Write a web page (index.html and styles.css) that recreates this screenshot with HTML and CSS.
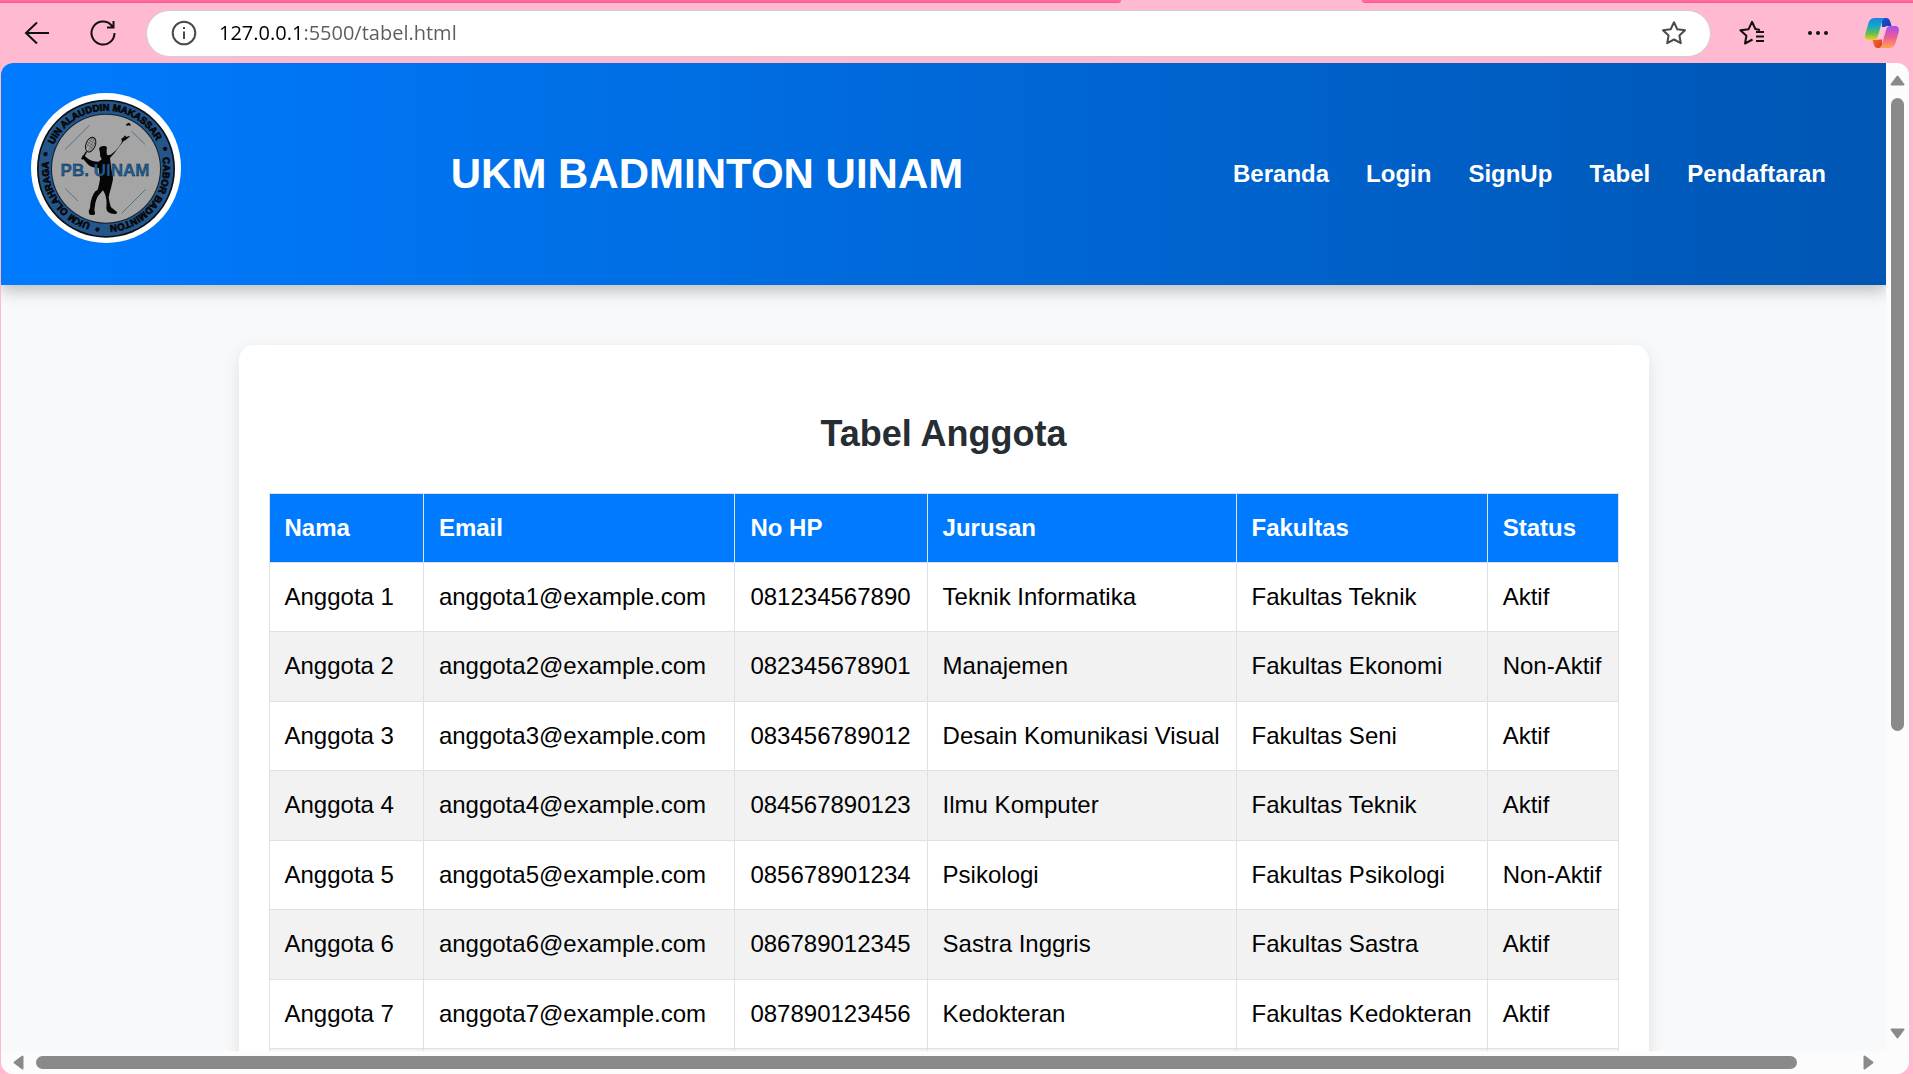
FILE: index.html
```html
<!DOCTYPE html>
<html lang="id">
<head>
<meta charset="utf-8">
<meta name="viewport" content="width=device-width, initial-scale=1">
<title>Tabel Anggota</title>
<link rel="stylesheet" href="styles.css">
</head>
<body>
<div class="browser">
  <div class="tabstrip"><span class="tabstrip-left"></span><span class="tabstrip-right"></span></div>
  <div class="toolbar">
    <button class="tool" type="button" aria-label="Back">
      <svg width="28" height="28" viewBox="0 0 28 28"><path d="M26 14H3M14 3.500L3 14l11 10.500"/></svg>
    </button>
    <button class="tool" type="button" aria-label="Refresh">
      <svg width="28" height="28" viewBox="0 0 28 28"><path d="M25.500 14A11.500 11.500 0 1 1 22.500 6.300L24.500 8.500M24.500 2v6.500H18"/></svg>
    </button>
    <div class="address">
      <svg class="soft" width="26" height="26" viewBox="0 0 26 26"><circle cx="13" cy="13" r="11.300"/><path d="M13 11.500v7.500M13 7v2"/></svg>
      <input class="url" type="text" aria-label="Address" value="127.0.0.1:5500/tabel.html">
      <button class="star" type="button" aria-label="Add to favorites">
        <svg class="soft" width="26" height="26" viewBox="0 0 26 26"><path d="M13 2.200l3.300 7 7.700 1-5.600 5.300 1.400 7.700-6.800-3.700-6.800 3.700 1.400-7.700L2 10.200l7.700-1z" stroke-linejoin="round"/></svg>
      </button>
    </div>
    <button class="tool" type="button" aria-label="Favorites">
      <svg width="28" height="28" viewBox="0 0 28 28"><path d="M14.500 20.500l-7.500 4 1.400-7.700-6-5.500 8.200-1.100L14 2.800l3.400 7.200 4.600 1M18 13h8M18 17.500h8M18 22h8" stroke-linejoin="round"/></svg>
    </button>
    <button class="tool" type="button" aria-label="Settings and more">
      <svg class="dots" width="28" height="28" viewBox="0 0 28 28"><circle cx="6" cy="14" r="2"/><circle cx="14" cy="14" r="2"/><circle cx="22" cy="14" r="2"/></svg>
    </button>
    <button class="tool copilot" type="button" aria-label="Copilot">
      <svg width="36" height="34" viewBox="0 0 36 34">
        <defs>
          <linearGradient id="cool" x1="0" y1="0" x2="0" y2="1"><stop offset="0" stop-color="#1687dd"/><stop offset=".35" stop-color="#12a6cf"/><stop offset=".7" stop-color="#5fc04e"/><stop offset="1" stop-color="#f4cf18"/></linearGradient>
          <linearGradient id="warm" x1="0" y1="0" x2="0" y2="1"><stop offset="0" stop-color="#a34df0"/><stop offset=".5" stop-color="#ee5a96"/><stop offset="1" stop-color="#ffa552"/></linearGradient>
          <linearGradient id="navy" x1="0" y1="0" x2="1" y2="1"><stop offset="0" stop-color="#1c50d0"/><stop offset="1" stop-color="#1734b4"/></linearGradient>
          <linearGradient id="flame" x1="0" y1="0" x2="1" y2="1"><stop offset="0" stop-color="#f8791f"/><stop offset="1" stop-color="#d83b2c"/></linearGradient>
        </defs>
        <path fill="url(#navy)" d="M18 2h4c2.500 0 3.500 1 4.200 3.500L27.500 10H24c-3 0-5 2-6 5z"/>
        <path fill="url(#flame)" d="M18 32h-4c-2.500 0-3.500-1-4.200-3.500L8.500 24H12c3 0 5-2 6-6z"/>
        <path fill="url(#cool)" d="M11 2h11c-2.500 0-3.500 2-4.300 5l-4 13.500c-.7 2.500-2 3.500-4.400 3.500H5c-3.200 0-4.600-2.500-3.700-6L4.500 7C5.600 3.500 7.500 2 11 2z"/>
        <path fill="url(#warm)" d="M25 32H14c2.500 0 3.500-2 4.300-5l4-13.500c.7-2.500 2-3.500 4.400-3.500H31c3.200 0 4.600 2.500 3.700 6l-3.200 11c-1.100 3.500-3 5-6.500 5z"/>
        <path fill="#ffc4d6" d="M17.200 11h4.600l-3.700 12.500h-4.800z"/>
      </svg>
    </button>
  </div>

  <div class="viewport">
    <div class="page">
      <header class="site-header">
        <svg class="logo" viewBox="34 41 450 450" role="img" aria-label="PB. UINAM">
          <defs><path id="ring" d="M87 266A172 172 0 0 1 431 266"/></defs>
          <circle cx="259" cy="266" r="225" fill="#fff"/>
          <circle cx="259" cy="268" r="207" fill="#0b1015"/>
          <circle cx="259" cy="268" r="202" fill="#24568c"/>
          <circle cx="259" cy="268" r="165" fill="#10202c"/>
          <circle cx="259" cy="268" r="162" fill="#a5a5a5"/>
          <g class="ring-text">
            <text transform="rotate(-2 259 266)"><textPath href="#ring" startOffset="50%">UIN ALAUDDIN MAKASSAR</textPath></text>
            <text transform="rotate(72 259 266)"><textPath href="#ring" startOffset="50%">*</textPath></text>
            <text transform="rotate(128 259 266)"><textPath href="#ring" startOffset="50%">CABOR BADMINTON</textPath></text>
            <text transform="rotate(188 259 266)"><textPath href="#ring" startOffset="50%">*</textPath></text>
            <text transform="rotate(236 259 266)"><textPath href="#ring" startOffset="50%">UKM OLAHRAGA</textPath></text>
            <text transform="rotate(283 259 266)"><textPath href="#ring" startOffset="50%">*</textPath></text>
          </g>
          <path d="M136 211L209 138M336 156l40 39M136 327l39 38M306 402l72-72" fill="none" stroke="#2c5878" stroke-width="2"/>
          <g fill="#060606">
            <path d="M238 207q6-9 18-7 8 2 5 12-1 14 3 16l9-2q18-12 34-39l-2-9 7-4q3-9 6-4l1 3 10-3q4 2-4 6-7 7-13 9l-14 17q-13 20-27 34l4 34q6 15 5 30l-5 22q-5 16-8 32 2 17 7 30l17 13q4 6-5 7-16 0-24-9l-2-8q3-27-5-45l-5-9-15 17q-5 8-8 21l-3 21q4 13 0 14-10 2-15-1l-2-9 4-10q1-25 11-43 4-9 12-12 5-17 7-31l-4-34q-22 0-34-13l-15-17q-2-7 5-8l12 10q13 9 31 9 8-5 10-7-7-11-5-20z"/>
            <path d="M184 238l15-22 3 2-13 23zM318 137l8-7 6 3 1 7-5-2-5 1z"/>
          </g>
          <g fill="none" stroke="#111" stroke-width="3">
            <ellipse cx="213" cy="196" rx="14" ry="23" transform="rotate(22 213 196)"/>
            <path stroke-width="1" d="M202 187l22 14M200 194l21 15M207 181l22 14M213 175l15 9M206 214l18-36M200 205l18-29M211 215l17-29"/>
          </g>
          <text class="club" x="256" y="290">PB. UINAM</text>
        </svg>
        <h1 class="site-title">UKM BADMINTON UINAM</h1>
        <nav class="site-nav">
          <a href="#">Beranda</a>
          <a href="#">Login</a>
          <a href="#">SignUp</a>
          <a href="#">Tabel</a>
          <a href="#">Pendaftaran</a>
        </nav>
      </header>
      <main class="content">
        <section class="card">
          <h2 class="card-title">Tabel Anggota</h2>
          <table class="members">
            <colgroup>
              <col class="col-name"><col class="col-email"><col class="col-phone"><col class="col-major"><col class="col-faculty"><col class="col-status">
            </colgroup>
            <thead>
              <tr><th>Nama</th><th>Email</th><th>No HP</th><th>Jurusan</th><th>Fakultas</th><th>Status</th></tr>
            </thead>
            <tbody>
              <tr><td>Anggota 1</td><td>anggota1@example.com</td><td>081234567890</td><td>Teknik Informatika</td><td>Fakultas Teknik</td><td>Aktif</td></tr>
              <tr><td>Anggota 2</td><td>anggota2@example.com</td><td>082345678901</td><td>Manajemen</td><td>Fakultas Ekonomi</td><td>Non-Aktif</td></tr>
              <tr><td>Anggota 3</td><td>anggota3@example.com</td><td>083456789012</td><td>Desain Komunikasi Visual</td><td>Fakultas Seni</td><td>Aktif</td></tr>
              <tr><td>Anggota 4</td><td>anggota4@example.com</td><td>084567890123</td><td>Ilmu Komputer</td><td>Fakultas Teknik</td><td>Aktif</td></tr>
              <tr><td>Anggota 5</td><td>anggota5@example.com</td><td>085678901234</td><td>Psikologi</td><td>Fakultas Psikologi</td><td>Non-Aktif</td></tr>
              <tr><td>Anggota 6</td><td>anggota6@example.com</td><td>086789012345</td><td>Sastra Inggris</td><td>Fakultas Sastra</td><td>Aktif</td></tr>
              <tr><td>Anggota 7</td><td>anggota7@example.com</td><td>087890123456</td><td>Kedokteran</td><td>Fakultas Kedokteran</td><td>Aktif</td></tr>
              <tr><td></td><td></td><td></td><td></td><td></td><td></td></tr>
            </tbody>
          </table>
        </section>
      </main>
    </div>
    <div class="scroll scroll-y" aria-hidden="true">
      <svg width="15" height="11" viewBox="0 0 15 11"><path d="M7.500 1.500L13.500 9.500h-12z"/></svg>
      <div class="track"><div class="thumb"></div></div>
      <svg width="15" height="11" viewBox="0 0 15 11"><path d="M7.500 9.500L1.500 1.500h12z"/></svg>
    </div>
    <div class="scroll scroll-x" aria-hidden="true">
      <svg width="11" height="15" viewBox="0 0 11 15"><path d="M1.500 7.500L9.500 1.500v12z"/></svg>
      <div class="track"><div class="thumb"></div></div>
      <svg width="11" height="15" viewBox="0 0 11 15"><path d="M9.500 7.500L1.500 13.500v-12z"/></svg>
    </div>
    <div class="scroll"></div>
  </div>
</div>
</body>
</html>
```
FILE: styles.css
```css
* { box-sizing: border-box; }

body {
  margin: 0;
  font-family: "Liberation Sans", Arial, sans-serif;
  font-size: 24px;
  line-height: 38px;
  color: #000;
}

/* Browser frame */
.browser {
  display: flex;
  flex-direction: column;
  height: 100vh;
  background: #ffb9d1;
  overflow: hidden;
}

.tabstrip {
  display: flex;
  justify-content: space-between;
  height: 3px;
}

.tabstrip span {
  background: #ff6a9f;
  border-bottom: 1px solid #ff5590;
}

.tabstrip-left { width: 58.600%; border-bottom-right-radius: 4px; }
.tabstrip-right { width: 28.800%; border-bottom-left-radius: 4px; }

.toolbar {
  display: flex;
  align-items: center;
  height: 60px;
  padding: 0 0 0 4px;
}

.toolbar button {
  display: flex;
  align-items: center;
  justify-content: center;
  flex: none;
  padding: 0;
  border: 0;
  background: none;
}

.toolbar .tool { width: 66px; height: 48px; }
.toolbar .tool.copilot { width: 62px; }

.toolbar svg { fill: none; stroke: #111; stroke-width: 2; flex: none; }
.toolbar svg.soft { stroke: #4a4a4a; }
.toolbar svg.dots { fill: #111; stroke: none; }
.toolbar .copilot svg { stroke: none; }

.address {
  display: flex;
  align-items: center;
  flex: 1;
  height: 47px;
  margin: 0 8px 0 10px;
  padding: 0 23px 0 24px;
  border: 1px solid #cfcfcf;
  border-radius: 24px;
  background: #fff;
}

.url {
  flex: 1;
  min-width: 0;
  margin-left: 22px;
  padding: 0;
  border: 0;
  outline: 0;
  font-family: "Open Sans", "Noto Sans", sans-serif;
  font-size: 20px;
  line-height: 30px;
  color: transparent;
  background: linear-gradient(90deg, #000 82px, #5c5c5c 82px);
  -webkit-background-clip: text;
  background-clip: text;
}

.viewport {
  display: grid;
  grid-template: minmax(0, 1fr) 23px / minmax(0, 1fr) 23px;
  flex: 1;
  min-height: 0;
  margin: 0 4px 0 1px;
  border-radius: 12px;
  overflow: hidden;
}

/* Scrollbars */
.scroll { display: flex; align-items: center; background: #fcfcfc; }
.scroll-y { flex-direction: column; grid-area: 1 / 2; padding: 12px 0; gap: 12px; }
.scroll-x { grid-area: 2 / 1; padding: 0 12px; gap: 12px; }
.scroll svg { flex: none; fill: #8a8a8a; stroke: #8a8a8a; stroke-width: 2; stroke-linejoin: round; }
.track { flex: 1; }
.thumb { background: #8a8a8a; border-radius: 7px; }
.scroll-y .thumb { width: 13px; height: 69%; }
.scroll-x .thumb { width: 97%; height: 13px; }

/* Page */
.page { overflow: hidden; background: #f8f9fb; }

.site-header {
  display: flex;
  align-items: center;
  justify-content: space-between;
  padding: 30px;
  color: #fff;
  background: linear-gradient(to right, #007bff, #0056b3);
  box-shadow: 0 6px 15px rgba(0, 0, 0, 0.24);
}

.logo { width: 150px; height: 150px; margin-bottom: 12px; }

.ring-text {
  font-size: 29px;
  font-weight: bold;
  text-anchor: middle;
  fill: #080808;
  stroke: #080808;
  stroke-width: 2px;
}

.club {
  font-size: 51px;
  font-weight: bold;
  text-anchor: middle;
  fill: #1f5f96;
  stroke: #0a1c2c;
  stroke-width: 1px;
}

.site-title { margin: 0; font-size: 42px; line-height: 68px; }

.site-nav { display: flex; gap: 37px; padding-right: 30px; }
.site-nav a { color: #fff; font-weight: bold; text-decoration: none; }

.content { padding: 60px 30px; }

.card {
  max-width: 1410px;
  margin: 0 auto;
  padding: 30px;
  border-radius: 15px;
  background: #fff;
  box-shadow: 0 6px 18px rgba(0, 0, 0, 0.1);
}

.card-title {
  margin: 30px 0;
  font-size: 36px;
  line-height: 58px;
  text-align: center;
  color: #262d33;
}

.members { width: 100%; border-collapse: collapse; }
.members th,
.members td {
  padding: 15px;
  border: 1px solid #dee2e6;
  text-align: left;
  vertical-align: top;
  white-space: nowrap;
}
.members th { color: #fff; background: #007bff; }
.members tbody tr:nth-child(even) { height: 70px; background: #f2f2f2; }

.col-name { width: 11.450%; }
.col-email { width: 23.100%; }
.col-phone { width: 14.250%; }
.col-major { width: 22.900%; }
.col-faculty { width: 18.600%; }
.col-status { width: 9.700%; }
```
